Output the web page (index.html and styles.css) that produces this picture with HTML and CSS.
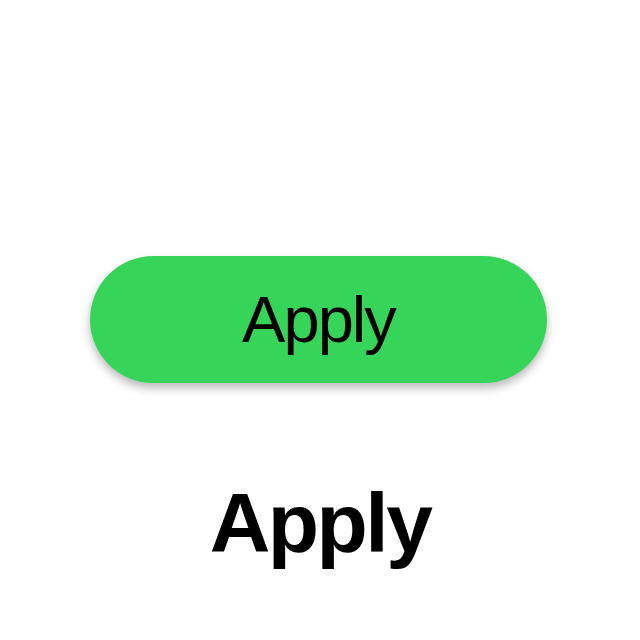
FILE: index.html
```html
<!DOCTYPE html>
<html>
<head>
<meta charset="utf-8">
<link rel="stylesheet" href="styles.css">
</head>
<body>
<main class="page">
  <button class="apply-btn" type="button">Apply</button>
  <h1 class="label">Apply</h1>
</main>
</body>
</html>
```

FILE: styles.css
```css
html, body {
  margin: 0;
  padding: 0;
  background: #ffffff;
}

.page {
  width: 640px;
  height: 640px;
  box-sizing: border-box;
  display: flex;
  flex-direction: column;
  align-items: center;
  padding-top: 256px;
  font-family: "Liberation Sans", Arial, sans-serif;
}

.apply-btn {
  width: 457px;
  height: 127px;
  margin-left: -3px;
  border: none;
  border-radius: 64px;
  background: #36d458;
  color: #000000;
  font-family: "Liberation Sans", Arial, sans-serif;
  font-size: 65px;
  line-height: 1;
  letter-spacing: -0.03em;
  display: flex;
  align-items: center;
  justify-content: center;
  padding: 0;
  box-shadow: 0 5px 10px rgba(0, 0, 0, 0.28);
}

.label {
  margin: 98px 0 0 0;
  font-size: 84px;
  font-weight: 700;
  line-height: 1;
  letter-spacing: -0.03em;
  color: #000000;
}
```
